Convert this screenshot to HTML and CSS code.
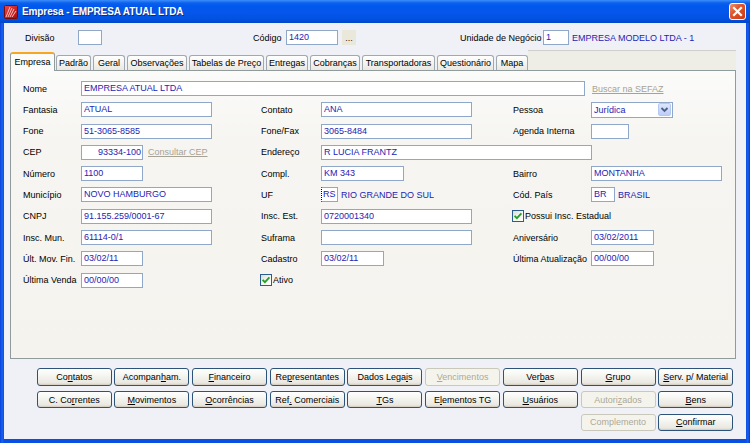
FILE: index.html
```html
<!DOCTYPE html>
<html lang="pt-BR">
<head>
<meta charset="utf-8">
<title>Empresa</title>
<link rel="stylesheet" href="styles.css">
</head>
<body>
<div class="window">
  <div class="titlebar">
    <svg class="appicon" viewBox="0 0 14 14" width="14" height="14">
      <defs>
        <linearGradient id="ig" x1="0" y1="0" x2="1" y2="1">
          <stop offset="0" stop-color="#F04848"/>
          <stop offset="1" stop-color="#A80808"/>
        </linearGradient>
      </defs>
      <rect x="0.5" y="0.5" width="13" height="13" rx="1" fill="url(#ig)" stroke="#7A0A0A" stroke-width="1"/>
      <path d="M2 12 L6 2 M4 12 L8 3 M6 12 L10 4 M8 12 L12 6" stroke="#FFD0D0" stroke-width="0.9" fill="none"/>
    </svg>
    <span class="title">Empresa - EMPRESA ATUAL LTDA</span>
    <div class="close">
      <svg viewBox="0 0 17 17" width="17" height="17">
        <path d="M5 5 L12 12 M12 5 L5 12" stroke="#fff" stroke-width="2.2" stroke-linecap="square"/>
      </svg>
    </div>
  </div>

  <div class="client">
    <div class="toprow">
      <span class="tlbl l-div">Divisão</span>
      <span class="inp w-div"></span>
      <span class="tlbl l-cod">Código</span>
      <span class="inp v w-cod">1420</span>
      <span class="dots">...</span>
      <span class="tlbl l-un">Unidade de Negócio</span>
      <span class="inp v w-un">1</span>
      <span class="desc">EMPRESA MODELO LTDA - 1</span>
    </div>

    <div class="tabs">
      <span class="tab active t-emp">Empresa</span>
      <span class="tab t-pad">Padrão</span>
      <span class="tab t-ger">Geral</span>
      <span class="tab t-obs">Observações</span>
      <span class="tab t-tab">Tabelas de Preço</span>
      <span class="tab t-ent">Entregas</span>
      <span class="tab t-cob">Cobranças</span>
      <span class="tab t-tra">Transportadoras</span>
      <span class="tab t-que">Questionário</span>
      <span class="tab t-map">Mapa</span>
      <span class="tabfill"></span>
    </div>

    <div class="panel">
      <div class="form">
        <!-- row 1 -->
        <span class="lbl">Nome</span>
        <div class="fld span4"><span class="inp v w505">EMPRESA ATUAL LTDA</span></div>
        <div class="fld"><span class="link">Buscar na SEFAZ</span></div>
        <!-- row 2 -->
        <span class="lbl">Fantasia</span>
        <div class="fld"><span class="inp v w131">ATUAL</span></div>
        <span class="lbl">Contato</span>
        <div class="fld"><span class="inp v w151">ANA</span></div>
        <span class="lbl">Pessoa</span>
        <div class="fld">
          <span class="select"><span class="selval">Jurídica</span><span class="selbtn"><svg viewBox="0 0 13 13" width="13" height="13"><path d="M3.5 5 L6.5 8 L9.5 5" stroke="#4D6185" stroke-width="1.8" fill="none"/></svg></span></span>
        </div>
        <!-- row 3 -->
        <span class="lbl">Fone</span>
        <div class="fld"><span class="inp v w131">51-3065-8585</span></div>
        <span class="lbl">Fone/Fax</span>
        <div class="fld"><span class="inp v w151">3065-8484</span></div>
        <span class="lbl">Agenda Interna</span>
        <div class="fld"><span class="inp v w38"></span></div>
        <!-- row 4 -->
        <span class="lbl">CEP</span>
        <div class="fld"><span class="inp v w62 right">93334-100</span><span class="link ml5">Consultar CEP</span></div>
        <span class="lbl">Endereço</span>
        <div class="fld span2"><span class="inp v w271">R LUCIA FRANTZ</span></div>
        <div></div>
        <!-- row 5 -->
        <span class="lbl">Número</span>
        <div class="fld"><span class="inp v w62">1100</span></div>
        <span class="lbl">Compl.</span>
        <div class="fld"><span class="inp v w83">KM 343</span></div>
        <span class="lbl">Bairro</span>
        <div class="fld"><span class="inp v w131">MONTANHA</span></div>
        <!-- row 6 -->
        <span class="lbl">Município</span>
        <div class="fld"><span class="inp v w131">NOVO HAMBURGO</span></div>
        <span class="lbl">UF</span>
        <div class="fld"><span class="inp v w17 focus">RS</span><span class="desc2">RIO GRANDE DO SUL</span></div>
        <span class="lbl">Cód. País</span>
        <div class="fld"><span class="inp v w24">BR</span><span class="desc2">BRASIL</span></div>
        <!-- row 7 -->
        <span class="lbl">CNPJ</span>
        <div class="fld"><span class="inp v w131">91.155.259/0001-67</span></div>
        <span class="lbl">Insc. Est.</span>
        <div class="fld"><span class="inp v w151">0720001340</span></div>
        <div class="fld span2 chkcell">
          <span class="chk"><svg viewBox="0 0 12 12" width="12" height="12"><path d="M2.6 5.8 L4.9 8.2 L9.4 3.4" stroke="#21A121" stroke-width="1.8" fill="none"/></svg></span>
          <span class="chktxt">Possui Insc. Estadual</span>
        </div>
        <!-- row 8 -->
        <span class="lbl">Insc. Mun.</span>
        <div class="fld"><span class="inp v w131">61114-0/1</span></div>
        <span class="lbl">Suframa</span>
        <div class="fld"><span class="inp v w151"></span></div>
        <span class="lbl">Aniversário</span>
        <div class="fld"><span class="inp v w63">03/02/2011</span></div>
        <!-- row 9 -->
        <span class="lbl">Últ. Mov. Fin.</span>
        <div class="fld"><span class="inp v w62">03/02/11</span></div>
        <span class="lbl">Cadastro</span>
        <div class="fld"><span class="inp v w63">03/02/11</span></div>
        <span class="lbl">Última Atualização</span>
        <div class="fld"><span class="inp v w63">00/00/00</span></div>
        <!-- row 10 -->
        <span class="lbl">Última Venda</span>
        <div class="fld"><span class="inp v w62">00/00/00</span></div>
        <div class="fld span4 chkcell">
          <span class="chk"><svg viewBox="0 0 12 12" width="12" height="12"><path d="M2.6 5.8 L4.9 8.2 L9.4 3.4" stroke="#21A121" stroke-width="1.8" fill="none"/></svg></span>
          <span class="chktxt">Ativo</span>
        </div>
      </div>
    </div>

    <div class="buttons">
      <span class="btn"><span>Co<u>n</u>tatos</span></span>
      <span class="btn"><span>Acompan<u>h</u>am.</span></span>
      <span class="btn"><span><u>F</u>inanceiro</span></span>
      <span class="btn"><span>Re<u>p</u>resentantes</span></span>
      <span class="btn"><span>Dados Lega<u>i</u>s</span></span>
      <span class="btn disabled"><span><u>V</u>encimentos</span></span>
      <span class="btn"><span>Ver<u>b</u>as</span></span>
      <span class="btn"><span><u>G</u>rupo</span></span>
      <span class="btn"><span><u>S</u>erv. p/ Material</span></span>

      <span class="btn"><span>C. Co<u>r</u>rentes</span></span>
      <span class="btn"><span><u>M</u>ovimentos</span></span>
      <span class="btn"><span><u>O</u>corrências</span></span>
      <span class="btn"><span>Ref<u>.</u> Comerciais</span></span>
      <span class="btn"><span><u>T</u>Gs</span></span>
      <span class="btn"><span>E<u>l</u>ementos TG</span></span>
      <span class="btn"><span><u>U</u>suários</span></span>
      <span class="btn disabled"><span>Autori<u>z</u>ados</span></span>
      <span class="btn"><span><u>B</u>ens</span></span>

      <span class="btn disabled col8"><span>Complemento</span></span>
      <span class="btn"><span><u>C</u>onfirmar</span></span>
    </div>
  </div>
</div>
</body>
</html>
```

FILE: styles.css
```css
* { box-sizing: border-box; }
html, body { margin: 0; padding: 0; }
body {
  width: 750px;
  height: 443px;
  overflow: hidden;
  font-family: "Liberation Sans", Arial, sans-serif;
  font-size: 9px;
  color: #000;
  background: #fff;
}

.window {
  width: 750px;
  height: 443px;
  display: flex;
  flex-direction: column;
  background: linear-gradient(to right, #0740D8 0, #1A62F0 2px, #0A4FE4 4px, #0A4FE4 746px, #1A5EEE 748px, #0535C8 750px);
}

/* ---------- title bar ---------- */
.titlebar {
  height: 23px;
  flex: none;
  display: flex;
  align-items: center;
  background: linear-gradient(#3C8EFC 0, #0B61EC 3px, #0058EE 6px, #0556EB 50%, #0152E2 82%, #0046C9 100%);
}
.appicon { margin-left: 4px; flex: none; }
.title {
  margin-left: 4px;
  color: #fff;
  font-weight: bold;
  font-size: 10px;
  letter-spacing: -0.1px;
  text-shadow: 1px 1px 0 #0A2A8E;
}
.close {
  margin-left: auto;
  margin-right: 4px;
  width: 17px;
  height: 17px;
  border: 1px solid #fff;
  border-radius: 3px;
  background: linear-gradient(135deg, #F0906C 0, #E1562C 40%, #CC3A12 100%);
  display: flex;
  align-items: center;
  justify-content: center;
}
.close svg { display: block; margin: -1px; }

/* ---------- client ---------- */
.client {
  flex: 1;
  margin: 0 4px 4px 4px;
  background: #F0F1F7;
  display: flex;
  flex-direction: column;
}

/* ---------- top row ---------- */
.toprow {
  display: flex;
  align-items: center;
  height: 15px;
  margin-top: 7px;
  padding-left: 21px;
  flex: none;
}
.tlbl { white-space: nowrap; }
.l-div { width: 53px; }
.l-cod { margin-left: 151px; width: 33px; }
.l-un { margin-left: 104px; width: 83px; }
.w-div { width: 24px; }
.w-cod { width: 52px; }
.w-un { width: 26px; }
.dots {
  margin-left: 4px;
  width: 14px;
  height: 15px;
  background: #EAE8DA;
  text-align: center;
  line-height: 17px;
  font-size: 9px;
  color: #222;
}
.desc { margin-left: 3px; color: #2424B4; white-space: nowrap; }

/* ---------- inputs ---------- */
.inp {
  display: inline-block;
  height: 15px;
  border: 1px solid #8FA7C8;
  background: #fff;
  padding: 0 2px;
  line-height: 13px;
  white-space: nowrap;
  overflow: hidden;
  flex: none;
}
.v { color: #2424B4; }
.right { text-align: right; padding-right: 1px; }
.w505 { width: 504px; }
.w271 { width: 271px; }
.w151 { width: 151px; }
.w131 { width: 131px; }
.w83 { width: 83px; }
.w63 { width: 63px; }
.w62 { width: 62px; }
.w38 { width: 38px; }
.w24 { width: 24px; }
.w17 { width: 17px; padding-left: 1px; }
.focus { border-left-style: dotted; border-left-color: #000; }

/* ---------- tabs ---------- */
.tabs {
  flex: none;
  height: 21px;
  margin: 5px 0 -1px 6px;
  width: 726px;
  display: flex;
  align-items: flex-end;
  position: relative;
  z-index: 1;
}
.tab {
  height: 15px;
  margin-bottom: 1px;
  margin-right: 2px;
  border: 1px solid #A0A9AD;
  border-bottom: none;
  border-radius: 3px 3px 0 0;
  background: linear-gradient(#FFFFFF 0, #F6F6F3 40%, #E9E8E2 100%);
  text-align: center;
  line-height: 14px;
  white-space: nowrap;
  flex: none;
}
.tab.active {
  height: 19px;
  margin-bottom: 0;
  position: relative;
  border-color: #919B9C;
  border-top: 2px solid #F5A623;
  background: #FBFBFA;
  line-height: 16px;
  margin-right: 1px;
}
.t-emp { width: 45px; }
.t-pad { width: 35px; }
.t-ger { width: 32px; }
.t-obs { width: 60px; }
.t-tab { width: 75px; }
.t-ent { width: 42px; }
.t-cob { width: 50px; }
.t-tra { width: 73px; }
.t-que { width: 57px; }
.t-map { width: 32px; }
.tabfill {
  flex: 1;
  height: 20px;
  margin-left: -2px;
  margin-bottom: 1px;
  border-top: 1px solid #CFCFCB;
  background: #EEEDE6;
}

/* ---------- panel ---------- */
.panel {
  flex: none;
  margin-left: 6px;
  width: 726px;
  height: 289px;
  border: 1px solid #919B9C;
  background: linear-gradient(#FBFBFA 0, #F6F5F1 25%, #F4F3EE 100%);
}
.form {
  display: grid;
  grid-template-columns: 58px 180px 60px 192px 78px 1fr;
  grid-auto-rows: 15px;
  row-gap: 6.3px;
  padding: 10px 0 0 12px;
}
.lbl { white-space: nowrap; display: flex; align-items: center; }
.fld { display: flex; align-items: center; white-space: nowrap; }
.span4 { grid-column: span 4; }
.span2 { grid-column: span 2; }
.link { color: #A6A396; text-decoration: underline; }
.ml5 { margin-left: 5px; }
.fld > .link:first-child { margin-left: 1px; }
.desc2 { margin-left: 3px; color: #2424B4; }

.select {
  display: flex;
  width: 82px;
  height: 16px;
  border: 1px solid #8FA7C8;
  background: #fff;
  align-items: center;
}
.selval { flex: 1; color: #2424B4; padding-left: 2px; }
.selbtn {
  width: 13px;
  height: 13px;
  margin-right: 1px;
  border: 1px solid #B5C8F2;
  border-radius: 2px;
  background: linear-gradient(#DCE6FC, #BCCEF8);
  display: flex;
  align-items: center;
  justify-content: center;
}
.selbtn svg { display: block; margin: -1px; }

.chkcell { margin-left: -1px; }
.chk {
  width: 12px;
  height: 12px;
  border: 1px solid #2A5C8C;
  background: linear-gradient(135deg, #DCDCD6 0, #F4F4F0 50%, #FFFFFF 100%);
  display: flex;
  align-items: center;
  justify-content: center;
  flex: none;
}
.chk svg { display: block; margin: -1px; }
.chktxt { margin-left: 1px; }

/* ---------- buttons ---------- */
.buttons {
  display: grid;
  grid-template-columns: repeat(9, 75px);
  grid-auto-rows: 17.5px;
  column-gap: 2.7px;
  row-gap: 5.3px;
  margin: 9px 0 0 32.7px;
}
.btn {
  border: 1px solid #2D5478;
  border-radius: 3px;
  background: linear-gradient(#FFFFFF 0, #F5F5F1 40%, #EAE8E1 85%, #D9D5CB 100%);
  box-shadow: inset 0 -1px 0 #D6D0C5;
  display: flex;
  align-items: center;
  justify-content: center;
  white-space: nowrap;
  color: #000;
}
.btn.disabled {
  border-color: #CAC8BB;
  background: #F5F4EC;
  box-shadow: none;
  color: #ACA899;
}
.col8 { grid-column: 8; }
```
